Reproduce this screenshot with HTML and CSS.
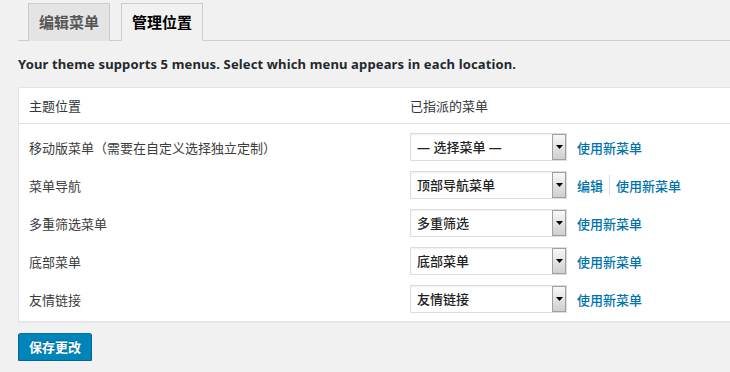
FILE: index.html
```html
<!DOCTYPE html>
<html lang="zh-CN">
<head>
  <meta charset="UTF-8" />
  <meta name="viewport" content="width=device-width, initial-scale=1.0"/>
  <title>菜单 - 管理位置</title>
  <link rel="stylesheet" href="styles.css">
</head>
<body>
  <div class="wrap">
    <nav class="nav-tabs">
      <a class="nav-tab" href="#">编辑菜单</a>
      <a class="nav-tab nav-tab-active" href="#">管理位置</a>
    </nav>

    <p class="intro">Your theme supports 5 menus. Select which menu appears in each location.</p>

    <form class="locations-form">
      <div class="locations">
        <div class="loc-head">
          <div class="cell">主题位置</div>
          <div class="cell">已指派的菜单</div>
        </div>

        <div class="loc-body">
          <div class="loc-row">
            <div class="cell">移动版菜单（需要在自定义选择独立定制）</div>
            <div class="cell menu-cell">
              <label class="select">
                <select><option>— 选择菜单 —</option></select>
                <span class="select-arrow"><svg width="7" height="4" viewBox="0 0 7 4"><path d="M0 0h7L3.5 4z" fill="#000"/></svg></span>
              </label>
              <span class="actions"><a href="#">使用新菜单</a></span>
            </div>
          </div>

          <div class="loc-row">
            <div class="cell">菜单导航</div>
            <div class="cell menu-cell">
              <label class="select">
                <select><option>顶部导航菜单</option></select>
                <span class="select-arrow"><svg width="7" height="4" viewBox="0 0 7 4"><path d="M0 0h7L3.5 4z" fill="#000"/></svg></span>
              </label>
              <span class="actions"><a href="#">编辑</a><span class="sep"></span><a href="#">使用新菜单</a></span>
            </div>
          </div>

          <div class="loc-row">
            <div class="cell">多重筛选菜单</div>
            <div class="cell menu-cell">
              <label class="select">
                <select><option>多重筛选</option></select>
                <span class="select-arrow"><svg width="7" height="4" viewBox="0 0 7 4"><path d="M0 0h7L3.5 4z" fill="#000"/></svg></span>
              </label>
              <span class="actions"><a href="#">使用新菜单</a></span>
            </div>
          </div>

          <div class="loc-row">
            <div class="cell">底部菜单</div>
            <div class="cell menu-cell">
              <label class="select">
                <select><option>底部菜单</option></select>
                <span class="select-arrow"><svg width="7" height="4" viewBox="0 0 7 4"><path d="M0 0h7L3.5 4z" fill="#000"/></svg></span>
              </label>
              <span class="actions"><a href="#">使用新菜单</a></span>
            </div>
          </div>

          <div class="loc-row">
            <div class="cell">友情链接</div>
            <div class="cell menu-cell">
              <label class="select">
                <select><option>友情链接</option></select>
                <span class="select-arrow"><svg width="7" height="4" viewBox="0 0 7 4"><path d="M0 0h7L3.5 4z" fill="#000"/></svg></span>
              </label>
              <span class="actions"><a href="#">使用新菜单</a></span>
            </div>
          </div>
        </div>
      </div>

      <button type="button" class="button-primary">保存更改</button>
    </form>
  </div>
</body>
</html>
```

FILE: styles.css
```css
html {
  overflow: hidden;
}
body {
  margin: 0;
  background: #f1f1f1;
  color: #444;
  font-family: "Noto Sans", "Noto Sans CJK SC", sans-serif;
  font-size: 13px;
}
.wrap {
  padding: 3px 0 0 18px;
}

/* tabs */
.nav-tabs {
  display: flex;
  gap: 11px;
  padding-left: 10px;
  border-bottom: 1px solid #ccc;
}
.nav-tab {
  display: block;
  padding: 6px 10px;
  margin-bottom: -1px;
  border: 1px solid #ccc;
  border-bottom: none;
  background: #e4e4e4;
  color: #555;
  font-size: 15px;
  line-height: 24px;
  font-weight: 600;
  text-decoration: none;
}
.nav-tab-active {
  background: #f1f1f1;
  color: #000;
  border-bottom: 1px solid #f1f1f1;
}

.intro {
  margin: 13px 0;
  line-height: 20px;
  font-weight: 700;
  letter-spacing: 0.14px;
  color: #23282d;
}

/* locations box */
.locations {
  width: 730px;
  background: #fff;
  border: 1px solid #e5e5e5;
  box-shadow: 0 1px 1px rgba(0,0,0,0.04);
}
.loc-head,
.loc-row {
  display: grid;
  grid-template-columns: 381px 1fr;
  align-items: center;
}
.loc-head {
  height: 35px;
  border-bottom: 1px solid #e1e1e1;
  color: #32373c;
}
.loc-body {
  padding: 4px 0 3px;
}
.loc-row {
  height: 38px;
  color: #3c3c3c;
}
.cell {
  padding: 0 10px;
}
.menu-cell {
  display: flex;
  align-items: center;
}

.select {
  position: relative;
  display: block;
  width: 157px;
  height: 28px;
}
.select select {
  appearance: none;
  -webkit-appearance: none;
  width: 100%;
  height: 100%;
  margin: 0;
  padding: 0 20px 0 6px;
  border: 1px solid #ddd;
  border-radius: 0;
  background: #fff;
  box-shadow: inset 0 1px 2px rgba(0,0,0,0.07);
  font: inherit;
  font-weight: 500;
  color: #222;
}
.select-arrow {
  position: absolute;
  top: 1px;
  right: 1px;
  bottom: 1px;
  width: 14px;
  display: flex;
  align-items: center;
  justify-content: center;
  border: 1px solid #a0a0a0;
  background: linear-gradient(#f8f8f8, #cfcfcf);
  pointer-events: none;
  box-sizing: border-box;
}

.actions {
  display: flex;
  align-items: center;
  margin-left: 10px;
}
.actions a {
  color: #0073aa;
  font-weight: 500;
  text-decoration: none;
}
.sep {
  width: 1px;
  height: 20px;
  background: #ddd;
  margin: 0 6px;
}

.button-primary {
  margin-top: 11px;
  height: 28px;
  padding: 0 10px 1px;
  border: 1px solid;
  border-color: #0073aa #006799 #006799;
  border-radius: 3px;
  background: #0085ba;
  box-shadow: 0 1px 0 #006799;
  color: #fff;
  text-shadow: 0 -1px 1px #006799;
  font: inherit;
  font-weight: 600;
  cursor: pointer;
}
```
